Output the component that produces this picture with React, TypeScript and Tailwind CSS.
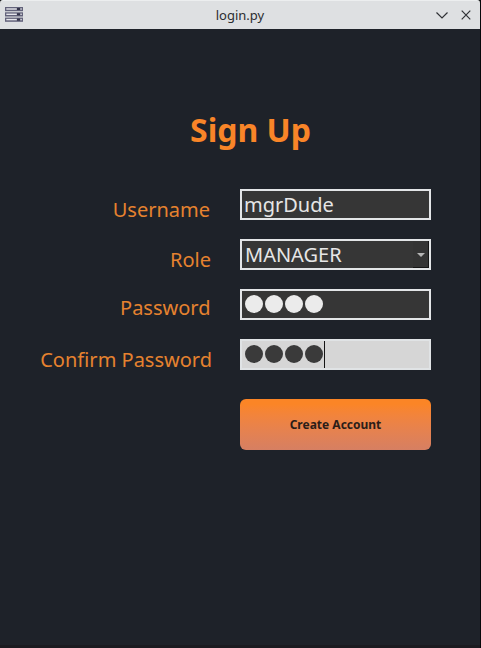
import type { ReactNode } from "react";

function TitleBar() {
  return (
    <header className="flex h-[29px] shrink-0 items-center justify-between rounded-t-[3px] border-t border-[#eceeef] bg-[#dee0e2] pl-[5px] pr-[7px]">
      <div className="w-[46px]">
        <svg width="18" height="15" viewBox="0 0 18 15" className="mt-[-2px] block">
          {[0, 5.3, 10.6].map((y) => (
            <g key={y}>
              <rect x="0" y={y} width="18" height="4.2" fill="#62627a" />
              <rect x="1.3" y={y + 1.3} width="10.5" height="1.4" fill="#e6e6ec" />
              <rect x="12" y={y + 1} width="3" height="2" fill="#34344a" />
              <rect x="15.3" y={y + 1.3} width="1.6" height="1.4" fill="#d0d0d8" />
            </g>
          ))}
        </svg>
      </div>
      <span className="text-[13px] leading-[28px] text-[#2b2d30]">login.py</span>
      <svg width="44" height="14" viewBox="0 0 44 14" fill="none" stroke="#303236" strokeWidth="1.2" className="mt-[-1px]">
        <path d="M7.5 4.5 L13 10 L18.5 4.5" />
        <path d="M32.7 2.7 L41.3 11.3 M41.3 2.7 L32.7 11.3" />
      </svg>
    </header>
  );
}

function Row({ label, labelClass, children }: { label: string; labelClass: string; children: ReactNode }) {
  return (
    <div className="flex h-[31px] w-full">
      <label className={`w-[240px] whitespace-nowrap text-right text-[20px] leading-[31px] text-[#e6822f] ${labelClass}`}>
        {label}
      </label>
      <div className="flex w-[191px] items-center">{children}</div>
    </div>
  );
}

function Dots({ color }: { color: string }) {
  return (
    <div className="flex gap-[1.8px]">
      {[0, 1, 2, 3].map((i) => (
        <span key={i} className={`h-[18px] w-[18.2px] rounded-full ${color}`} />
      ))}
    </div>
  );
}

export default function App() {
  return (
    <div className="flex h-[648px] w-[481px] flex-col overflow-hidden border-r border-[#07090b] bg-[#07090b] font-['Noto_Sans',sans-serif]">
      <TitleBar />
      <main className="flex flex-1 flex-col border-b-3 border-[#1b1b20] bg-[#1e2229]">
        <h1 className="mt-[79px] pl-[21px] text-center text-[32px] font-bold leading-[44px] text-[#f98528]">Sign Up</h1>
        <form className="mt-[37px] flex flex-col gap-[19px]">
          <Row label="Username" labelClass="pt-[5px] pr-[30px]">
            <div className="h-[31px] w-full border-2 border-[#e3e5e7] bg-[#363636] pl-[2px] text-[20px] leading-[27px] text-[#e6e6e6]">
              mgrDude
            </div>
          </Row>
          <Row label="Role" labelClass="pt-[5px] pr-[29px]">
            <div className="flex h-[31px] w-full justify-between border-2 border-[#e3e5e7] bg-[#363636] pl-[3px] text-[20px] leading-[27px] text-[#e6e6e6]">
              <span>MANAGER</span>
              <span className="flex h-[27px] w-[16px] items-center justify-center border-b border-r border-[#151515] bg-[#343434] pt-px">
                <svg width="8" height="4" viewBox="0 0 8 4">
                  <path d="M0 0 H8 L4 4 Z" fill="#b5b5b5" />
                </svg>
              </span>
            </div>
          </Row>
          <Row label="Password" labelClass="pt-[3px] pr-[29.5px]">
            <div className="flex h-[31px] w-full items-center border-2 border-[#e3e5e7] bg-[#363636] pb-[1px] pl-[3px]">
              <Dots color="bg-[#ebebeb]" />
            </div>
          </Row>
          <Row label="Confirm Password" labelClass="pt-[5px] pr-[28px]">
            <div className="flex h-[31px] w-full items-center border-2 border-[#e0e3e5] bg-[#d6d6d6] pl-[3px]">
              <div className="pb-[1px]">
                <Dots color="bg-[#3a3a3a]" />
              </div>
              <span className="ml-[0.8px] h-[27px] w-px bg-[#151515]" />
            </div>
          </Row>
          <button
            type="button"
            className="ml-[240px] mt-[10px] h-[51px] w-[191px] rounded-[6px] bg-linear-to-b from-[#fb8526] from-10% to-[#d67f62] text-[12px] font-bold text-[#2b1d18]"
          >
            Create Account
          </button>
        </form>
      </main>
    </div>
  );
}
